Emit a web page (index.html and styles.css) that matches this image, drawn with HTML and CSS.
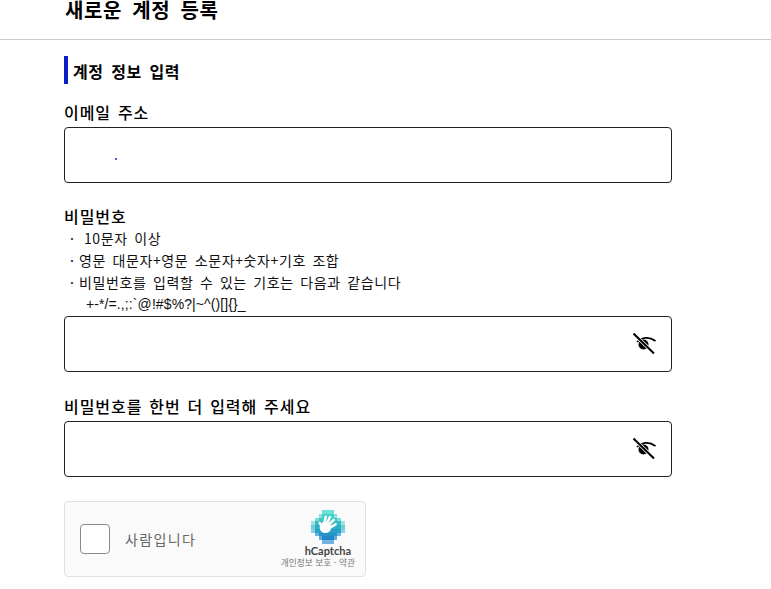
FILE: index.html
```html
<!DOCTYPE html>
<html lang="ko">
<head>
  <meta charset="UTF-8">
  <title>새로운 계정 등록</title>
  <link rel="stylesheet" href="styles.css">
</head>
<body>
  <header class="page-header">
    <h1>새로운 계정 등록</h1>
  </header>
  <main class="content">
    <h2 class="section-title">계정 정보 입력</h2>

    <div class="field field-email">
      <label class="field-label">이메일 주소</label>
      <div class="input-box"><span class="dot"></span></div>
    </div>

    <div class="field field-password">
      <label class="field-label">비밀번호</label>
      <ul class="hints">
        <li><span class="mark mark-wide">·</span>10문자 이상</li>
        <li><span class="mark">·</span>영문 대문자+영문 소문자+숫자+기호 조합</li>
        <li><span class="mark">·</span>비밀번호를 입력할 수 있는 기호는 다음과 같습니다</li>
        <li class="symbols">+-*/=.,;:`@!#$%?|~^()[]{}_</li>
      </ul>
      <div class="input-box input-password">
        <svg class="eye" width="24" height="24" viewBox="0 0 24 24">
          <path d="M4 10C8 6 15 3.500 22.500 9" fill="none" stroke="#000" stroke-width="1.700"/>
          <circle cx="10.500" cy="12.500" r="5" fill="#000"/>
          <path d="M.5 1.500L21 21.500" stroke="#fff" stroke-width="3.500"/>
          <path d="M.5 1.500L21 21.500" stroke="#000" stroke-width="2"/>
        </svg>
      </div>
    </div>

    <div class="field field-confirm">
      <label class="field-label">비밀번호를 한번 더 입력해 주세요</label>
      <div class="input-box input-password">
        <svg class="eye" width="24" height="24" viewBox="0 0 24 24">
          <path d="M4 10C8 6 15 3.500 22.500 9" fill="none" stroke="#000" stroke-width="1.700"/>
          <circle cx="10.500" cy="12.500" r="5" fill="#000"/>
          <path d="M.5 1.500L21 21.500" stroke="#fff" stroke-width="3.500"/>
          <path d="M.5 1.500L21 21.500" stroke="#000" stroke-width="2"/>
        </svg>
      </div>
    </div>

    <div class="captcha">
      <span class="captcha-check"></span>
      <span class="captcha-text">사람입니다</span>
      <div class="captcha-brand">
        <svg class="captcha-logo" width="34" height="34" viewBox="0 0 9 9">
          <g shape-rendering="crispEdges">
            <rect x="3" y="0" width="3" height="1" fill="#6fe0d8"/>
            <rect x="2" y="1" width="5" height="1" fill="#86e4de"/>
            <rect x="3" y="1" width="3" height="1" fill="#41d0c8"/>
            <rect x="1" y="2" width="7" height="1" fill="#7fdcd8"/>
            <rect x="2" y="2" width="5" height="1" fill="#3cc6c6"/>
            <rect x="0" y="3" width="9" height="1" fill="#9ae4e2"/>
            <rect x="1" y="3" width="7" height="1" fill="#36bcc4"/>
            <rect x="0" y="4" width="9" height="1" fill="#6cd0d4"/>
            <rect x="1" y="4" width="7" height="1" fill="#30aec4"/>
            <rect x="0" y="5" width="9" height="1" fill="#8ad0e2"/>
            <rect x="1" y="5" width="7" height="1" fill="#2aa0c6"/>
            <rect x="1" y="6" width="7" height="1" fill="#68b6dc"/>
            <rect x="2" y="6" width="5" height="1" fill="#2494c8"/>
            <rect x="2" y="7" width="5" height="1" fill="#62aedb"/>
            <rect x="3" y="7" width="3" height="1" fill="#2088c6"/>
            <rect x="3" y="8" width="3" height="1" fill="#74b4e0"/>
          </g>
          <circle cx="3.800" cy="4.600" r="1.500" fill="#fff"/>
          <g stroke="#fff" stroke-width=".68" stroke-linecap="round">
            <path d="M3.400 4L3.900 1.800"/>
            <path d="M4 4L5 1.900"/>
            <path d="M4.400 4.200L6 2.600"/>
            <path d="M4.800 4.800L6.500 3.800"/>
            <path d="M3 4.600L2.300 3.400"/>
          </g>
        </svg>
        <span class="captcha-name">hCaptcha</span>
        <span class="captcha-links">개인정보 보호 - 약관</span>
      </div>
    </div>
  </main>
</body>
</html>
```

FILE: styles.css
```css
* { box-sizing: border-box; }
body { margin: 0; background: #fff; color: #000; font-family: "Noto Sans CJK KR", "Liberation Sans", sans-serif; overflow: hidden; }

.page-header { height: 40px; padding-left: 65px; border-bottom: 1px solid #ccc; }
.page-header h1 { margin: 0; font-size: 20px; line-height: 19px; font-weight: 700; letter-spacing: .6px; word-spacing: 4px; }

.content { padding: 16px 0 0 64px; width: 672px; }
.section-title { margin: 0; height: 28px; padding-left: 5px; border-left: 4px solid #0a1fc4; font-size: 16px; line-height: 30px; font-weight: 700; letter-spacing: .5px; word-spacing: 2.800px; }

.field-label { display: block; font-size: 16px; line-height: 24px; font-weight: 500; letter-spacing: .95px; word-spacing: 1.500px; }
.field-email { margin-top: 16px; }
.field-password { margin-top: 23px; }
.field-confirm { margin-top: 22px; }
.field-password .field-label { line-height: 21px; }
.field-email .input-box { margin-top: 3px; }
.field-confirm .input-box { margin-top: 3px; }

.input-box { position: relative; height: 56px; border: 1px solid #222; border-radius: 4px; background: #fff; }
.input-password { display: flex; align-items: center; justify-content: flex-end; padding-right: 14px; }
.dot { position: absolute; left: 50px; top: 30px; width: 2px; height: 2px; border-radius: 50%; background: #2222ee; }

.hints { margin: 0 0 1px; padding: 0; list-style: none; font-size: 14px; line-height: 22px; color: #111; letter-spacing: .6px; word-spacing: 2px; }
.hints li { display: flex; white-space: pre; }
.mark { width: 9px; margin-left: 6px; }
.mark-wide { width: 14px; }
.symbols { padding-left: 22px; letter-spacing: .1px; word-spacing: 0; font-family: "Liberation Sans", sans-serif; }

.captcha { display: flex; align-items: center; width: 302px; height: 76px; margin-top: 24px; padding-left: 15px; position: relative; background: #fafafa; border: 1px solid #e0e0e0; border-radius: 4px; }
.captcha-check { width: 30px; height: 30px; background: #fff; border: 1px solid #8a8a8a; border-radius: 4px; }
.captcha-text { margin-left: 15px; font-size: 14px; color: #666; letter-spacing: 1.400px; }
.captcha-brand { position: absolute; right: 10px; top: 8px; display: flex; flex-direction: column; align-items: flex-end; }
.captcha-logo { display: block; margin-right: 10px; }
.captcha-name { margin-right: 4px; font-family: "Lato", sans-serif; font-size: 11px; font-weight: 700; line-height: 13px; color: #444; }
.captcha-links { font-size: 8.700px; line-height: 11px; color: #777; white-space: nowrap; }
```
